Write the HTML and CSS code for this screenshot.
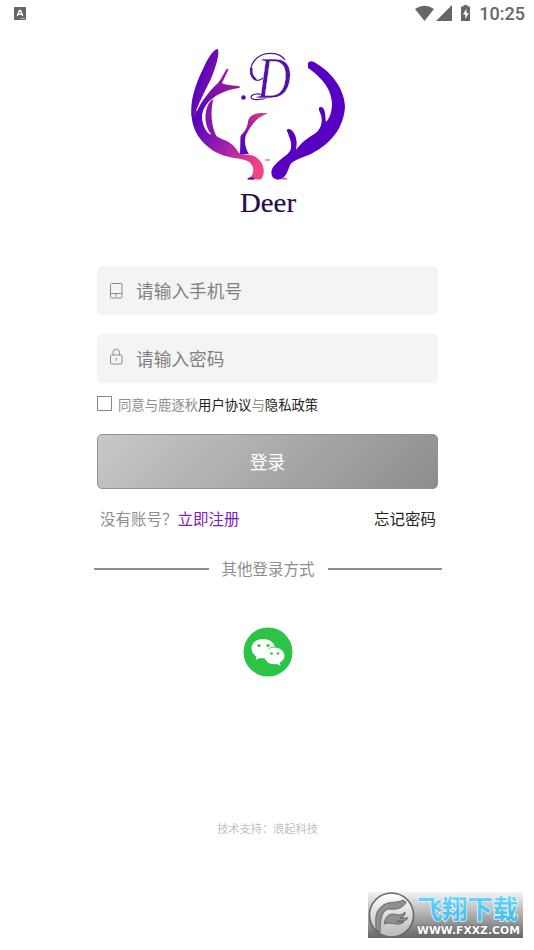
FILE: index.html
```html
<!DOCTYPE html>
<html lang="zh-CN">
<head>
<meta charset="utf-8">
<title>Deer</title>
<link rel="stylesheet" href="styles.css">
</head>
<body>
<header class="status">
  <svg class="status-app" viewBox="0 0 12 13"><rect width="12" height="13" rx="1" fill="#666"/><path d="M3.3 9 5.4 3.500h1.200L8.700 9M4 7.200h4" fill="none" stroke="#fff" stroke-width="1.400"/><path d="M6.500 11.500H11" stroke="#ccc" stroke-width=".8"/></svg>
  <div class="status-right">
    <svg class="status-icons" viewBox="0 0 58 18"><g fill="#666"><path d="M0 3Q9.500-3.500 19 3L9.500 15Z"/><path d="M37 -1v16H21Z"/><path d="M46 .5h2.500V-1h4V.5H55V15h-9Z"/></g><path d="m51.500 2.500-3.500 6h2.300v4.500l3.500-6h-2.300Z" fill="#fff"/></svg>
    <span class="clock">10:25</span>
  </div>
</header>
<main>
  <svg class="logo" viewBox="180 40 180 180">
    <defs>
      <linearGradient id="antler" gradientUnits="userSpaceOnUse" x1="198" y1="117" x2="259" y2="164"><stop offset="0" stop-color="#5505bd"/><stop offset=".45" stop-color="#991bad"/><stop offset="1" stop-color="#f34387"/></linearGradient>
      <linearGradient id="branch" gradientUnits="userSpaceOnUse" x1="198" y1="112" x2="228" y2="85"><stop offset="0" stop-color="#5505bd"/><stop offset="1" stop-color="#96199f"/></linearGradient>
      <linearGradient id="blade" gradientUnits="userSpaceOnUse" x1="198" y1="82" x2="216" y2="88"><stop offset="0" stop-color="#5804bd"/><stop offset="1" stop-color="#8c159f"/></linearGradient>
      <linearGradient id="inner" gradientUnits="userSpaceOnUse" x1="264" y1="114" x2="243" y2="143"><stop offset="0" stop-color="#d93a89"/><stop offset=".5" stop-color="#9f1fa6"/><stop offset="1" stop-color="#5709bf"/></linearGradient>
    </defs>
    <path fill="url(#blade)" d="M217 49C212 51 207 60 203 69C195 85 190 101 191.500 116H194.500C197 106 206 89 211 79C216 67 221 50 217 49Z"/>
    <path fill="url(#branch)" d="M194.500 118C198 105 209 91 218 83C222 78 225 71 227 68.500L228.500 69.500L222 83C227 86 234 85 240 86.500L239.500 88C221 90 202 101 202 118Z"/>
    <path fill="url(#antler)" d="M191.500 112C191 132 204 148 222 155C234 159 244 158 250 162.500C256 169 253 176 248 179.500H261C266 173 264 163 257 158C251 153 246 156 239 153C234 145 230 142 222 139C217 137 213 134 212 133L210 134.500C204 130 201 120 202 112L196 111L194.500 116Z"/>
    <path fill="#8517aa" d="M213.500 99C205 103 202 123 211 134L218 138.500C211 129 210 110 213.500 99Z"/>
    <path fill="url(#inner)" d="M268 113.300C256 112 249 115 248 122C247 129 244 132 240.500 136L240 154H249C245 148 244 141 246 135C251 126 255 118 268 113.300Z"/>
    <path fill="#5700c3" d="M308 63Q310 60 314 62C334 73 345 92 345 107C343 134 324 147 311 154C301 158 293 160 290 165C287 173 285 179 279 179.500C270 180 270 170 274 166C281 157 290 155 291 148C292 141 289 138 288 133Q285 129 289 129Q292 129 295 135C297 140 297 144 296 150C304 139 312 136 317 132C322 127 322 121 321.500 117C321 113 317 109 320 107C326 106 325 117 326 122C330 118 332 111 332 103C331 86 318 75 308 68Z"/>
    <path fill="#5507bd" d="M247 179.500Q249 176 254 178V179.500Z"/><path fill="#f34387" d="M281 179.500Q285 176 288 179.500Z"/>
    <path d="M265 160h5" stroke="#a7547d"/><circle cx="243.500" cy="97.500" r="2.300" fill="#5708b6"/>
    <path fill="none" stroke="#5211a8" stroke-width="1.200" d="M285 60C279 51 264 52 257 58C250 64 249 73 253 78C257 83 265 79 267 72M264 97C260 92 252 94 251 97C251 101 263 100 268 97"/>
    <path fill="none" stroke="#5211a8" stroke-width="2.400" d="M251.500 68Q250 76 256 79.500"/>
    <g class="initial"><text x="257" y="98" textLength="34" lengthAdjust="spacingAndGlyphs">D</text></g>
    <text class="brand" x="240" y="212" textLength="56" lengthAdjust="spacingAndGlyphs">Deer</text>
  </svg>
  <form class="login">
    <label class="field">
      <svg viewBox="0 0 16 18"><g fill="none" stroke="#8c8c8c"><rect x="2.500" y="1.500" width="11.500" height="14.500" rx="1"/><path d="M2.500 11.500H14M8.200 12v3"/></g></svg>
      <input type="text" placeholder="请输入手机号">
    </label>
    <label class="field">
      <svg class="lock" viewBox="0 0 16 18"><g fill="none" stroke="#8c8c8c"><rect x="2.500" y="7" width="11.500" height="9" rx="1"/><path d="M5 7V4.500Q5 1.200 8.200 1.200T11.500 4.500V7M8.200 10v3"/></g></svg>
      <input type="password" placeholder="请输入密码">
    </label>
    <div class="agree"><span class="box"></span><span>同意与鹿逐秋<b>用户协议</b>与<b>隐私政策</b></span></div>
    <button class="submit" type="button">登录</button>
    <div class="links"><span>没有账号？<a class="register">立即注册</a></span><a class="forgot">忘记密码</a></div>
  </form>
  <div class="divider"><span>其他登录方式</span></div>
  <svg class="wechat" viewBox="0 0 50 50"><circle cx="25" cy="25" r="24.500" fill="#2bc446"/><path fill="#fff" d="M20 12C13 12 8.500 16.500 8.500 21.500C8.500 25 10.500 27.500 13.500 29.500L12.500 33L17 31Q20 31.500 22 31C21 24 26 19.500 32 19.500C30.500 15 26 12 20 12Z"/><path fill="#fff" d="M31.500 20.500C25.500 20.500 21.500 24.500 21.500 29.200C21.500 34.500 27 38 34 37L37.500 39L36.800 35.500C40 33.500 41.500 31.500 41.500 29C41.500 24.500 37.500 20.500 31.500 20.500Z"/><g fill="#2bc446"><circle cx="16" cy="18.500" r="1.600"/><circle cx="25" cy="18.500" r="1.600"/><circle cx="28.500" cy="26.500" r="1.300"/><circle cx="35" cy="26.500" r="1.300"/></g></svg>
  <p class="support">技术支持：浪起科技</p>
</main>
<div class="watermark">
  <svg class="wm-badge" viewBox="0 0 47 46">
    <defs><linearGradient id="disc" x1="0" y1="0" x2="0" y2="1"><stop stop-color="#fff"/><stop offset="1" stop-color="#b8b8b8"/></linearGradient></defs>
    <circle cx="23.500" cy="23" r="22" fill="url(#disc)" stroke="#666" stroke-width="1.500"/>
    <path fill="#909090" stroke="#555" stroke-width=".8" d="M8 38C8 29 6 21 13 15C20 8 28 12 35 8L38 10C36 16 28 18 22 17C14 17 12 27 12 40Z"/>
    <path fill="#909090" stroke="#555" stroke-width=".8" d="M16 32C17 28 18 23 24 22C30 22 32 25 37 20Q38 24 32 26L40 26C38 30 32 29 29 29L36 30C30 35 24 29 16 32Z"/>
  </svg>
  <svg class="wm-words" viewBox="0 0 108 46">
    <defs><linearGradient id="cyan" x1="0" y1="0" x2="0" y2="1"><stop offset="0" stop-color="#78dcfb"/><stop offset="1" stop-color="#35b5ec"/></linearGradient></defs>
    <text class="wm-name" x="2" y="27" textLength="101" lengthAdjust="spacingAndGlyphs">飞翔下载</text>
    <text class="wm-url" x="2" y="42" textLength="103" lengthAdjust="spacingAndGlyphs">WWW.FXXZ.COM</text>
  </svg>
</div>
</body>
</html>
```
FILE: styles.css
```css
* { box-sizing: border-box; }
body {
  margin: 0;
  height: 950px;
  overflow: hidden;
  background: #fff;
  color: #8e8e8e;
  font-family: "Noto Sans CJK SC", sans-serif;
  display: flex;
  flex-direction: column;
}
svg { display: block; flex: none; }
.status {
  height: 40px;
  padding: 6px 9px 0 14px;
  display: flex;
  justify-content: space-between;
  align-items: flex-start;
}
.status-app { width: 12px; height: 13px; margin-top: 1px; }
.status-right { display: flex; }
.status-icons { width: 58px; height: 18px; margin-right: 6px; overflow: visible; }
.clock { font: 500 18px/16px Roboto, sans-serif; color: #666; }
main { display: flex; flex-direction: column; align-items: center; }
.logo { width: 180px; height: 180px; margin-left: 6px; }
.initial { font: italic 60px "Liberation Serif", serif; fill: #5211a8; stroke: #fff; stroke-width: .5px; }
.brand { font: 27px "Liberation Serif", serif; fill: #260b4c; stroke: #260b4c; stroke-width: .2px; }
.login { width: 341px; margin: 46px 0 0 1px; }
.field {
  height: 49px;
  margin-bottom: 19px;
  padding-left: 11px;
  display: flex;
  align-items: center;
  gap: 12px;
  background: #f4f4f4;
  border-radius: 5px;
}
.field svg { width: 16px; height: 18px; }
.field .lock { margin-top: -4px; }
.field input {
  flex: 1;
  min-width: 0;
  margin-top: -2px;
  padding: 0;
  border: 0;
  outline: 0;
  background: none;
  font: 17.7px/26px "Noto Sans CJK SC", sans-serif;
}
.field input::placeholder { color: #808080; opacity: 1; }
.agree {
  height: 20px;
  margin-top: -6px;
  display: flex;
  gap: 6px;
  font-size: 13.35px;
  line-height: 20px;
}
.agree span:last-child { margin-top: -1px; }
.box { width: 15px; height: 15px; border: 1px solid #888; }
.agree b { font-weight: 400; color: #222; }
.submit {
  display: block;
  width: 341px;
  height: 55px;
  margin-top: 18px;
  padding: 0 0 1px;
  border: 1px solid #929292;
  border-radius: 5px;
  background: linear-gradient(135deg, #c8c8c8, #8d8d8d);
  color: #fff;
  font: 17.7px "Noto Sans CJK SC", sans-serif;
}
.links {
  margin-top: 17px;
  padding: 0 2px 0 3px;
  display: flex;
  justify-content: space-between;
  font-size: 15.5px;
  line-height: 24px;
}
.register { color: #7f20b8; }
.forgot { color: #222; }
.divider {
  width: 348px;
  margin: 27px 0 0 2px;
  display: flex;
  align-items: center;
  gap: 13px;
  font-size: 15.5px;
  line-height: 24px;
}
.divider span { margin: -1px 0 1px; }
.divider::before, .divider::after { content: ""; flex: 1; height: 2px; background: #8e8e8e; }
.wechat { width: 50px; height: 50px; margin: 46px 0 0 2px; }
.support { margin: 143px 0 0 1px; font-size: 11.2px; line-height: 16px; color: #c0c0c0; }
.watermark {
  position: absolute;
  left: 368px;
  top: 892px;
  width: 155px;
  height: 46px;
  display: flex;
  background: linear-gradient(#f4f4f4, #666);
}
.wm-badge { width: 47px; height: 46px; }
.wm-words { width: 108px; height: 46px; overflow: visible; }
.wm-name {
  font: 700 26px "Noto Sans CJK SC", sans-serif;
  fill: url(#cyan);
  stroke: #e8f9ff;
  stroke-width: 1.5px;
  paint-order: stroke;
}
.wm-url {
  font: bold 10.5px "DejaVu Sans", sans-serif;
  fill: #fff;
  stroke: #666;
  stroke-width: 1px;
  paint-order: stroke;
}
```
